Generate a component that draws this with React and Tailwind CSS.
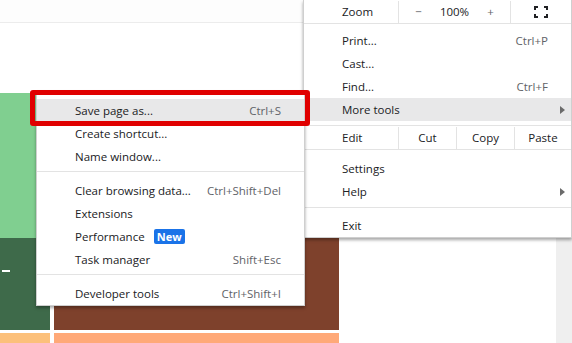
import React from "react";

const font = { fontFamily: '"Open Sans", "Noto Sans", sans-serif' };

function Arrow() {
  return (
    <svg width="5" height="8" viewBox="0 0 5 8" className="fill-[#6b6b6b]">
      <path d="M0 0 L5 4 L0 8 Z" />
    </svg>
  );
}

function FullscreenIcon() {
  return (
    <svg width="14" height="12" viewBox="0 0 14 12" fill="none" stroke="#202124" strokeWidth="2">
      <path d="M1 4V1h3M10 1h3v3M13 8v3h-3M4 11H1V8" />
    </svg>
  );
}

function Item({ label, shortcut, arrow, active, badge }) {
  return (
    <div
      className={`flex h-[23px] items-center pl-[38px] pr-[23px] ${
        active ? "bg-[#e8e8e9]" : ""
      }`}
    >
      <span className="text-[#202124]">{label}</span>
      {badge && (
        <span className="ml-[9px] flex h-[15px] w-[31px] items-center justify-center rounded-[2px] bg-[#1a73e8] text-[11px] font-bold text-white">
          {badge}
        </span>
      )}
      <span className="flex-1" />
      {shortcut && <span className="text-[#5f6368]">{shortcut}</span>}
      {arrow && (
        <span className="-mr-[17px]">
          <Arrow />
        </span>
      )}
    </div>
  );
}

function Sep({ top = "mt-[4px]", bottom = "mb-[6px]" }) {
  return <div className={`h-px bg-[#e3e3e3] ${top} ${bottom}`} />;
}

export default function App() {
  return (
    <div
      className="relative h-[343px] w-[572px] overflow-hidden bg-white text-[11.5px] leading-none"
      style={font}
    >
      {/* page underneath */}
      <div className="flex h-full flex-col">
        <div className="h-[22px] bg-[#fdfdfd]" />
        <div className="h-px bg-[#ececec]" />
        <div className="h-[70px]" />
        <div className="flex h-[145px]">
          <div className="w-[339px] bg-[#80cf90]" />
          <div className="flex-1" />
        </div>
        <div className="flex flex-1">
          <div className="flex w-[50px] flex-col">
            <div className="relative h-[92px] bg-[#3e6a4a]">
              <div className="absolute left-[2px] top-[32px] h-[2px] w-[8px] bg-white" />
            </div>
            <div className="h-[3px]" />
            <div className="flex-1 bg-[#fcc07b]" />
          </div>
          <div className="w-[4px]" />
          <div className="flex w-[285px] flex-col">
            <div className="h-[92px] bg-[#7e412c]" />
            <div className="h-[3px]" />
            <div className="flex-1 bg-[#ffa978]" />
          </div>
          <div className="w-[217px]" />
          <div className="flex-1 bg-[#efefef]" />
        </div>
      </div>

      {/* main menu */}
      <div className="absolute left-[303px] top-0 w-[269px] border border-t-0 border-[#cfcfcf] bg-white shadow-[0_2px_3px_rgba(0,0,0,0.35)]">
        <div className="flex h-[24px] border-b border-[#e3e3e3] pt-[1px]">
          <div className="flex w-[94px] items-center pl-[38px] text-[#202124]">Zoom</div>
          <div className="flex w-[112px] items-center justify-center gap-[6px] border-l border-[#e3e3e3]">
            <span className="w-[30px] text-center text-[#5f6368]">−</span>
            <span className="w-[30px] text-center text-[#202124]">100%</span>
            <span className="w-[30px] text-center text-[#5f6368]">+</span>
          </div>
          <div className="flex flex-1 items-center justify-center border-l border-[#e3e3e3]">
            <FullscreenIcon />
          </div>
        </div>
        <div className="pt-[5px]">
          <Item label="Print..." shortcut="Ctrl+P" />
          <Item label="Cast..." />
          <Item label="Find..." shortcut="Ctrl+F" />
          <Item label="More tools" arrow active />
        </div>
        <div className="mt-[4px] flex h-[25px] border-y border-[#e3e3e3] pt-[1px]">
          <div className="flex w-[94px] items-center pl-[38px] text-[#202124]">Edit</div>
          <div className="flex w-[58px] items-center justify-center border-l border-[#e3e3e3] text-[#202124]">Cut</div>
          <div className="flex w-[58px] items-center justify-center border-l border-[#e3e3e3] text-[#202124]">Copy</div>
          <div className="flex flex-1 items-center justify-center border-l border-[#e3e3e3] text-[#202124]">Paste</div>
        </div>
        <div className="pt-[7px]">
          <Item label="Settings" />
          <Item label="Help" arrow />
        </div>
        <Sep top="mt-[4px]" bottom="mb-[6px]" />
        <Item label="Exit" />
      </div>

      {/* more tools submenu */}
      <div className="absolute left-[36px] top-[91px] w-[269px] border border-[#cfcfcf] bg-white pt-[7px] shadow-[0_2px_3px_rgba(0,0,0,0.35)]">
        <Item label="Save page as..." shortcut="Ctrl+S" active />
        <Item label="Create shortcut..." />
        <Item label="Name window..." />
        <Sep top="mt-[3px]" bottom="mb-[7px]" />
        <Item label="Clear browsing data..." shortcut="Ctrl+Shift+Del" />
        <Item label="Extensions" />
        <Item label="Performance" badge="New" />
        <Item label="Task manager" shortcut="Shift+Esc" />
        <Sep top="mt-[3px]" bottom="mb-[7px]" />
        <Item label="Developer tools" shortcut="Ctrl+Shift+I" />
      </div>

      {/* highlight box */}
      <div className="absolute left-[30px] top-[90px] h-[36px] w-[280px] rounded-[3px] border-[5px] border-[#e00000]" />
    </div>
  );
}
